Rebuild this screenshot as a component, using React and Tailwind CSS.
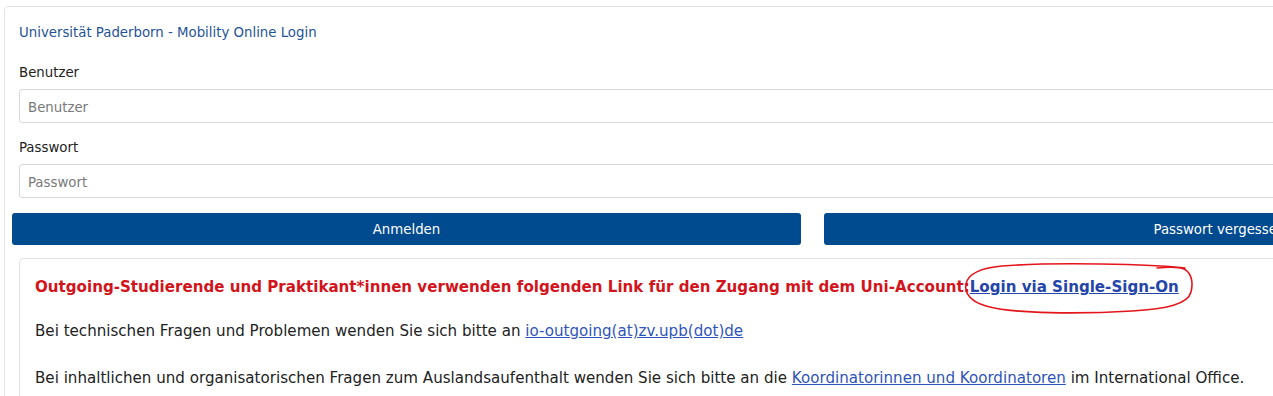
import { useState } from 'react'

const tahoma = { fontFamily: '"DejaVu Sans Condensed", "DejaVu Sans", sans-serif' }
const verdana = { fontFamily: '"DejaVu Sans", Verdana, sans-serif' }

function Field({ label, value, onChange, type = 'text' }) {
  return (
    <div className="flex flex-col">
      <label className="h-[41px] flex items-end pb-[6px] text-[14.8px] text-[#222]">{label}</label>
      <input
        type={type}
        value={value}
        onChange={(e) => onChange(e.target.value)}
        placeholder={label}
        className="h-[34px] border border-[#d9d9d9] rounded-[3px] px-[8px] text-[14.8px] text-[#333] placeholder:text-[#7a7a7a] outline-none"
        style={tahoma}
      />
    </div>
  )
}

// hand-drawn red mark around the SSO link
function Scribble() {
  return (
    <svg
      className="absolute left-[942px] top-[3px] pointer-events-none"
      width="236"
      height="56"
      viewBox="0 0 236 56"
      fill="none"
    >
      <path
        d="M223 6 C190 2, 90 0, 40 4 C18 6, 6 12, 4 22 C2 32, 10 40, 24 44 C50 52, 120 52, 170 49 C205 47, 226 42, 229 30 C232 18, 228 10, 222 7 C215 4, 205 5, 195 6"
        stroke="#e4161b"
        strokeWidth="1.6"
        strokeLinecap="round"
      />
    </svg>
  )
}

export default function App() {
  const [user, setUser] = useState('')
  const [pass, setPass] = useState('')

  return (
    <div className="w-[1273px] h-[396px] overflow-hidden bg-white">
      <div
        className="ml-[4px] mt-[6px] w-[1640px] h-[420px] border border-[#e4e4e4] rounded-[4px] px-[7px]"
        style={tahoma}
      >
        <div className="pl-[7px]">
          <div className="pt-[14px] h-[41px] text-[14.8px] text-[#1f5497]">
            Universität Paderborn - Mobility Online Login
          </div>
          <Field label="Benutzer" value={user} onChange={setUser} />
          <Field label="Passwort" value={pass} onChange={setPass} type="password" />
        </div>

        <div className="flex gap-[23px] mt-[15px]">
          <button className="shrink-0 w-[789px] h-[32px] bg-[#004a8f] rounded-[3px] text-white text-[14.8px]">
            Anmelden
          </button>
          <button className="shrink-0 w-[798px] h-[32px] bg-[#004a8f] rounded-[3px] text-white text-[14.8px]">
            Passwort vergessen?
          </button>
        </div>

        <div
          className="relative ml-[7px] mt-[13px] w-[1400px] border border-[#e2e2e2] rounded-[4px] pl-[15px] pt-[16px] h-[200px]"
          style={verdana}
        >
          <p className="text-[15.1px] leading-[24px] font-bold text-[#d2141c]">
            Outgoing-Studierende und Praktikant*innen verwenden folgenden Link für den Zugang mit dem Uni-Account:
            <a href="#" className="text-[#2546a8] underline">Login via Single-Sign-On</a>
          </p>
          <Scribble />
          <p className="mt-[20px] text-[15.1px] leading-[24px] text-[#222]">
            Bei technischen Fragen und Problemen wenden Sie sich bitte an{' '}
            <a href="#" className="text-[#2f54b8] underline">io-outgoing(at)zv.upb(dot)de</a>
          </p>
          <p className="mt-[23px] text-[15.1px] leading-[24px] text-[#222]">
            Bei inhaltlichen und organisatorischen Fragen zum Auslandsaufenthalt wenden Sie sich bitte an die{' '}
            <a href="#" className="text-[#2f54b8] underline">Koordinatorinnen und Koordinatoren</a> im International Office.
          </p>
        </div>
      </div>
    </div>
  )
}
